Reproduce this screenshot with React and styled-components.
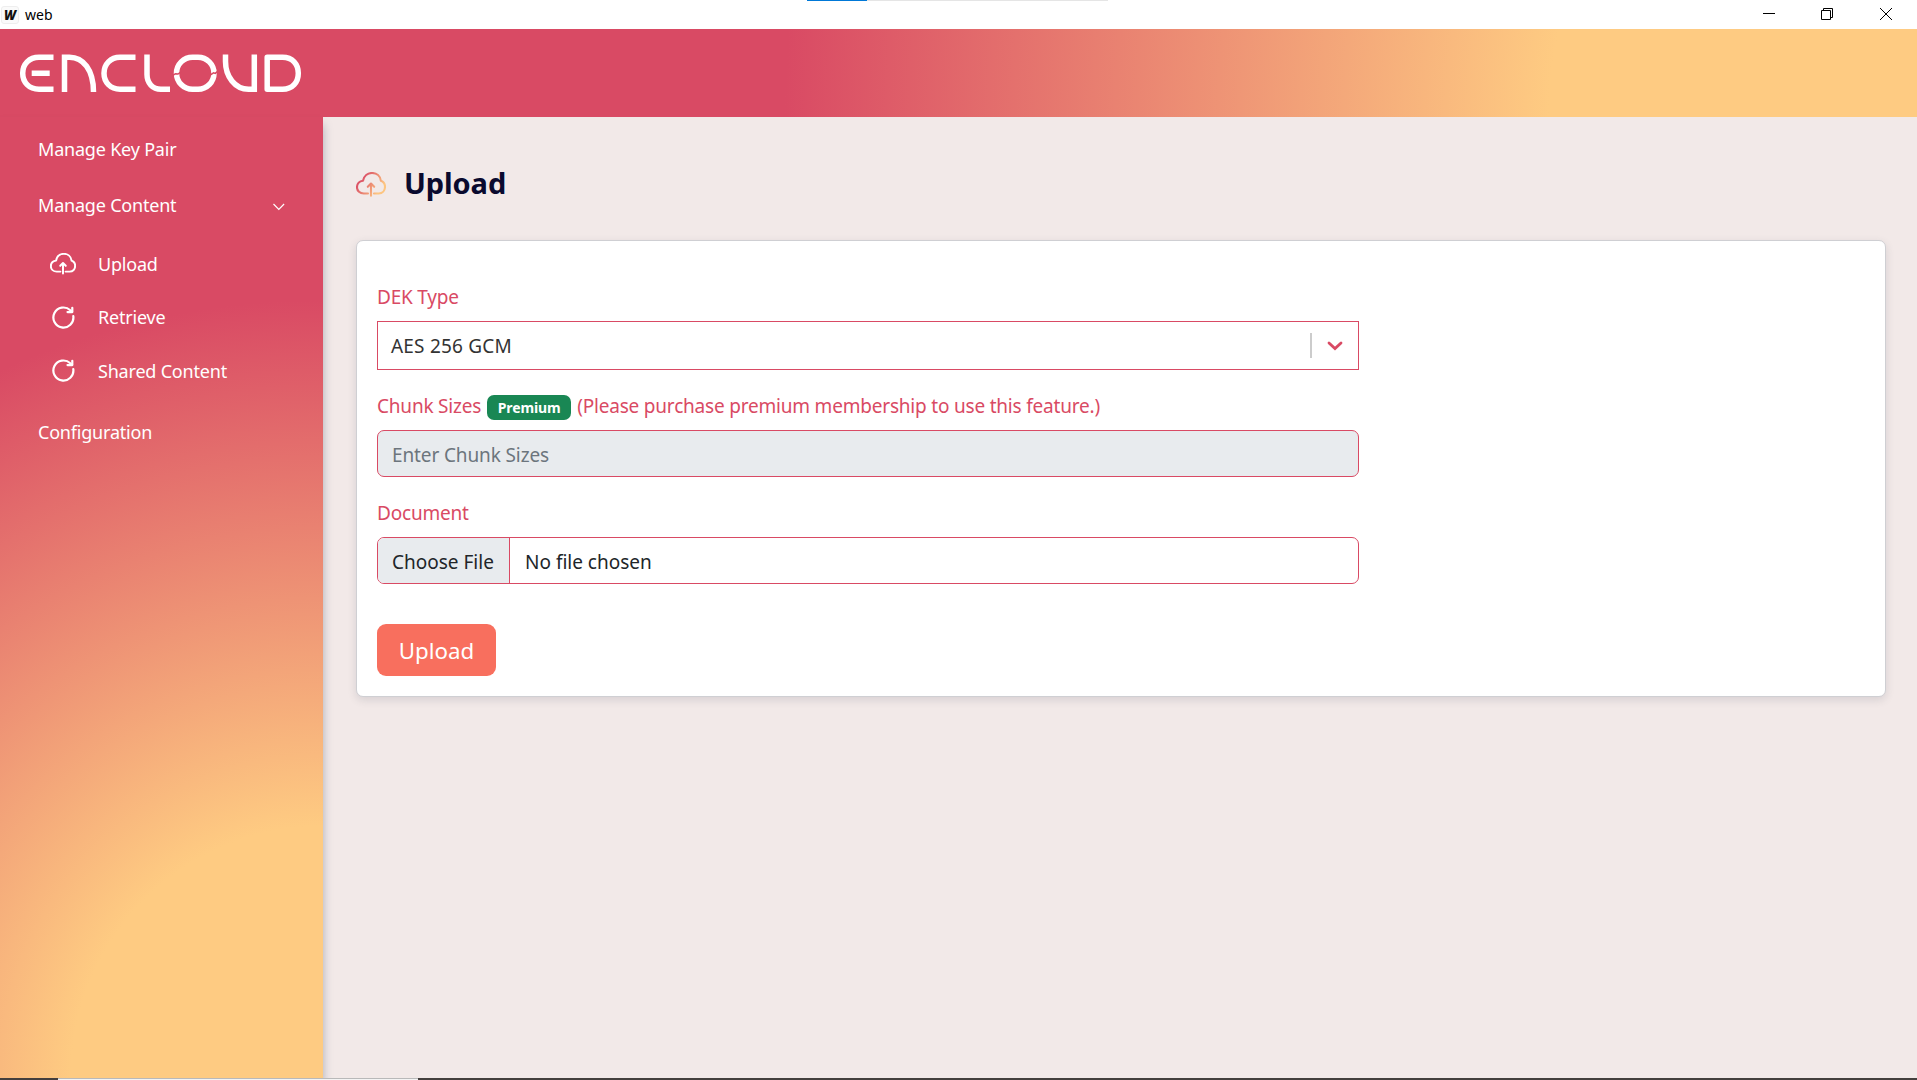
import React from "react";
import styled, { createGlobalStyle, css } from "styled-components";

const Global = createGlobalStyle`
  *, *::before, *::after { box-sizing: border-box; }
  body { margin: 0; background: #f2e9e8; font-family: "Noto Sans", "Open Sans", sans-serif; overflow: hidden; }
`;

const Window = styled.div`
  height: 1080px;
  display: flex;
  flex-direction: column;
`;

const TitleBar = styled.div`
  height: 29px;
  flex: none;
  display: flex;
  align-items: center;
  background: #fff;
  padding: 0 25px 0 1px;
  position: relative;
`;

const Favicon = styled.span`
  width: 18px;
  height: 18px;
  border: 1px solid #eee;
  border-radius: 3px;
  display: grid;
  place-items: center;
  background: #fafafa;
`;

const AppName = styled.span`
  margin-left: 6px;
  font-size: 14px;
  line-height: 20px;
  color: #000;
  flex: 1;
  display: flex;
`;

const Controls = styled.div`
  display: flex;
  align-items: center;
  gap: 46px;
  margin-bottom: 1px;
  svg { display: block; }
  svg:last-child { margin-left: 1px; }
`;

const Progress = styled.div`
  position: absolute;
  left: 807px;
  top: 0;
  width: 301px;
  height: 1px;
  background: linear-gradient(to right, #0078d7 60px, #e5e5e5 60px);
`;

const Header = styled.header`
  height: 88px;
  flex: none;
  padding: 25px 0 0 19px;
  background: radial-gradient(circle at 100% 100%, #fecb82 368px, #d94a64 1132px);
  svg { display: block; }
`;

const Body = styled.div`
  flex: 1;
  display: flex;
  min-height: 0;
`;

const Sidebar = styled.nav`
  width: 323px;
  flex: none;
  padding: 4px 0 0;
  background: radial-gradient(circle at 100% 100%, #fecb82 252px, #d94a64 778px);
  box-shadow: 0 8px 9px rgba(70, 85, 110, 0.4);
  z-index: 1;
  color: #fff;
  letter-spacing: -0.2px;
`;

const NavItem = styled.div`
  height: 56px;
  padding: 0 37px 0 38px;
  display: flex;
  align-items: center;
  justify-content: space-between;
  font-size: 18px;
  line-height: 24px;
`;

const SubMenu = styled.div`
  padding: 4px 0 6px;
`;

const SubItem = styled.div`
  height: 53.5px;
  padding-left: 49px;
  display: flex;
  align-items: center;
  gap: 22px;
  font-size: 18px;
`;

const IconBox = styled.span`
  width: 27px;
  height: 27px;
  padding-left: ${(p) => p.$inset || 0}px;
  display: grid;
  place-items: center;
`;

const Fit = styled.span`
  display: block;
  width: ${(p) => p.$w}px;
  svg { display: block; overflow: visible; }
`;

const Main = styled.main`
  flex: 1;
  padding: 40px 31px 0 33px;
`;

const Heading = styled.h1`
  margin: 0;
  height: 53px;
  padding-bottom: 2px;
  display: flex;
  align-items: center;
  gap: 18px;
  font-size: 29px;
  line-height: 40px;
  font-weight: 700;
  letter-spacing: -0.1px;
  color: #0a0a2e;
  svg { margin-top: 3px; }
`;

const Card = styled.section`
  margin-top: 30px;
  height: 457px;
  padding: 42px 20px 0;
  background: #fff;
  border: 1px solid #cfcfd3;
  border-radius: 7px;
  box-shadow: 0 3px 9px rgba(50, 55, 75, 0.14);
`;

const Form = styled.div`
  width: 982px;
`;

const Label = styled.div`
  display: flex;
  align-items: center;
  height: 30px;
  padding-bottom: 2px;
  font-size: 19px;
  letter-spacing: -0.2px;
  color: #d94a64;
`;

const Badge = styled.span`
  display: flex;
  align-items: center;
  justify-content: center;
  width: 84px;
  height: 25px;
  margin: 3px 6px 0 6px;
  border-radius: 7px;
  background: #198754;
  color: #fff;
  font-size: 14px;
  font-weight: 700;
  letter-spacing: -0.1px;
`;

const field = css`
  border: 1px solid #d94a64;
  display: flex;
  align-items: center;
  font-size: 19px;
  color: #212529;
`;

const Select = styled.div`
  ${field}
  height: 49px;
  margin: 8px 0 22px;
  padding: 0 15px 0 13px;
  color: #333;
  letter-spacing: 0.2px;
`;

const SelectValue = styled.span`
  flex: 1;
  display: flex;
`;

const Divider = styled.span`
  width: 2px;
  height: 25px;
  margin-right: 15px;
  background: #ccc;
`;

const TextField = styled.div`
  ${field}
  height: 47px;
  margin: 8px 0 22px;
  padding: 2px 14px 0;
  border-radius: 7px;
  background: #e8ebee;
  color: #6c757d;
  letter-spacing: -0.12px;
`;

const FileField = styled.div`
  ${field}
  height: 47px;
  margin: 8px 0 40px;
  border-radius: 7px;
  overflow: hidden;
`;

const FileButton = styled.span`
  width: 132px;
  height: 100%;
  padding: 2px 0 0 14px;
  display: flex;
  align-items: center;
  border-right: 1px solid #d94a64;
  background: #e8ebee;
`;

const FileName = styled.span`
  padding: 2px 0 0 15px;
`;

const Submit = styled.button`
  width: 119px;
  height: 52px;
  padding: 0;
  border: 0;
  border-radius: 9px;
  background: #f86f5e;
  color: #fff;
  font: 400 22.3px "Noto Sans", sans-serif;
  display: flex;
  justify-content: center;
  align-items: center;
`;

const Taskbar = styled.div`
  height: 2px;
  flex: none;
  z-index: 2;
  background:
    linear-gradient(#b9b9b9 1px, #f4f4f4 1px) 58px 0 / 360px 2px no-repeat,
    #443f3d;
`;

/* Single glyph or word squeezed to a fixed advance width. */
function Text({ w, size, weight = 400, fill = "currentColor", children, slant }) {
  return (
    <Fit $w={w}>
      <svg width={w} height={size} aria-label={children}>
        <text x="0" y={size * 0.86} fontSize={size} fontWeight={weight} fontStyle={slant ? "italic" : "normal"} fill={fill} textLength={w} lengthAdjust="spacingAndGlyphs">
          {children}
        </text>
      </svg>
    </Fit>
  );
}

const CloudUpload = ({ width, gradient, sw = 1.5 }) => (
  <svg width={width} height={(width * 25) / 30} viewBox="0 0 30 25" fill="none" stroke={gradient ? "url(#warm)" : "#fff"} strokeWidth={sw} strokeLinecap="round" strokeLinejoin="round">
    <defs>
      <linearGradient id="warm" gradientUnits="userSpaceOnUse" x1="3" y1="4" x2="27" y2="21">
        <stop offset="0.15" stopColor="#dc5467" />
        <stop offset="0.85" stopColor="#fdc581" />
      </linearGradient>
    </defs>
    <path d="M12 21.500H7.800C4 21.500 1 19 1 15.200c0-3.500 2.500-6 6-6.400C8 4 11.700 1 16 1c4.600 0 8.300 3 8.900 7.800 2.600 1 4.100 3.300 4.100 6 0 3.800-2.600 6.700-6.300 6.700H18" />
    <path d="M15 23.800V12M11.800 14.800 15 11.600l3.200 3.200" />
  </svg>
);

const Refresh = () => (
  <svg width="23" height="23" viewBox="0 0 23 23" fill="none" stroke="#fff" strokeWidth="2.200" strokeLinecap="round" strokeLinejoin="round">
    <path d="M21.300 10.200A10 10 0 1 1 18.300 4.300L20 5.800" />
    <path d="M20.300 1.800v4.300H15.500" />
  </svg>
);

const Logo = () => (
  <svg width="283" height="40" viewBox="0 0 283 40" fill="none" stroke="#fff" strokeWidth="5.500">
    <path d="M34.500 3.200H20C10 3.200 3.700 10.200 3.700 19.200S10 35.200 20 35.200h14.500M12.700 19.200h18" />
    <path d="M45.500 38V3.200h5C64 3.200 74.500 15.500 74.500 38" />
    <path d="M116.500 3.200H101c-9.500 0-16 7-16 16s6.500 16 16 16h15.500" />
    <path d="M128 .5v20c0 8.500 5.500 14.700 14 14.700h9" />
    <path d="M173.500 3.200h5.500a16 16 0 0 1 0 32h-5.500a16 16 0 0 1 0-32z" />
    <path d="M153.500 21.500l3-1.800 2.500.3 3.500-2.500M191.500 20.800l3-2 1.800.6 3.500-3" stroke="#d94a64" strokeWidth="1.500" />
    <path d="M206.500 .5v7c0 15 9.500 27.700 23 27.700h5.800V.5" />
    <path d="M248.200 3.200h15.300c10 0 15.800 7 15.800 16s-5.800 16-15.800 16h-15.300z" strokeLinejoin="round" />
  </svg>
);

export default function App() {
  return (
    <Window>
      <Global />
      <TitleBar>
        <Progress />
        <Favicon><Text w={12} size={14} weight={900} slant fill="#111">W</Text></Favicon>
        <AppName>web</AppName>
        <Controls>
          <svg width="12" height="12"><path d="M0 5.500h12" stroke="#000" /></svg>
          <svg width="12" height="12" fill="none" stroke="#000"><path d="M.5 2.500h9v9h-9zM2.500 2.500v-2h9v9h-2" /></svg>
          <svg width="12" height="12" stroke="#000"><path d="M0 0l12 12M12 0L0 12" /></svg>
        </Controls>
      </TitleBar>
      <Header><Logo /></Header>
      <Body>
        <Sidebar>
          <NavItem>Manage Key Pair</NavItem>
          <NavItem>
            Manage Content
            <svg width="14" height="14" viewBox="0 0 14 14" fill="none" stroke="#fff" strokeWidth="1.200"><path d="M1.500 6l5.300 5.300L12.100 6" /></svg>
          </NavItem>
          <SubMenu>
            <SubItem><IconBox><CloudUpload width={26} sw={2.300} /></IconBox>Upload</SubItem>
            <SubItem><IconBox $inset={2}><Refresh /></IconBox>Retrieve</SubItem>
            <SubItem><IconBox $inset={2}><Refresh /></IconBox>Shared Content</SubItem>
          </SubMenu>
          <NavItem>Configuration</NavItem>
        </Sidebar>
        <Main>
          <Heading><CloudUpload width={30} gradient sw={2.100} />Upload</Heading>
          <Card>
            <Form>
              <Label>DEK Type</Label>
              <Select>
                <SelectValue>AES 256 GCM</SelectValue>
                <Divider />
                <svg width="16" height="10" viewBox="0 0 16 10" fill="none" stroke="#d94a64" strokeWidth="2.800" strokeLinecap="round"><path d="M2 2l6 5.500L14 2" /></svg>
              </Select>
              <Label>Chunk Sizes<Badge>Premium</Badge>(Please purchase premium membership to use this feature.)</Label>
              <TextField>Enter Chunk Sizes</TextField>
              <Label>Document</Label>
              <FileField><FileButton>Choose File</FileButton><FileName>No file chosen</FileName></FileField>
              <Submit>Upload</Submit>
            </Form>
          </Card>
        </Main>
      </Body>
      <Taskbar />
    </Window>
  );
}
